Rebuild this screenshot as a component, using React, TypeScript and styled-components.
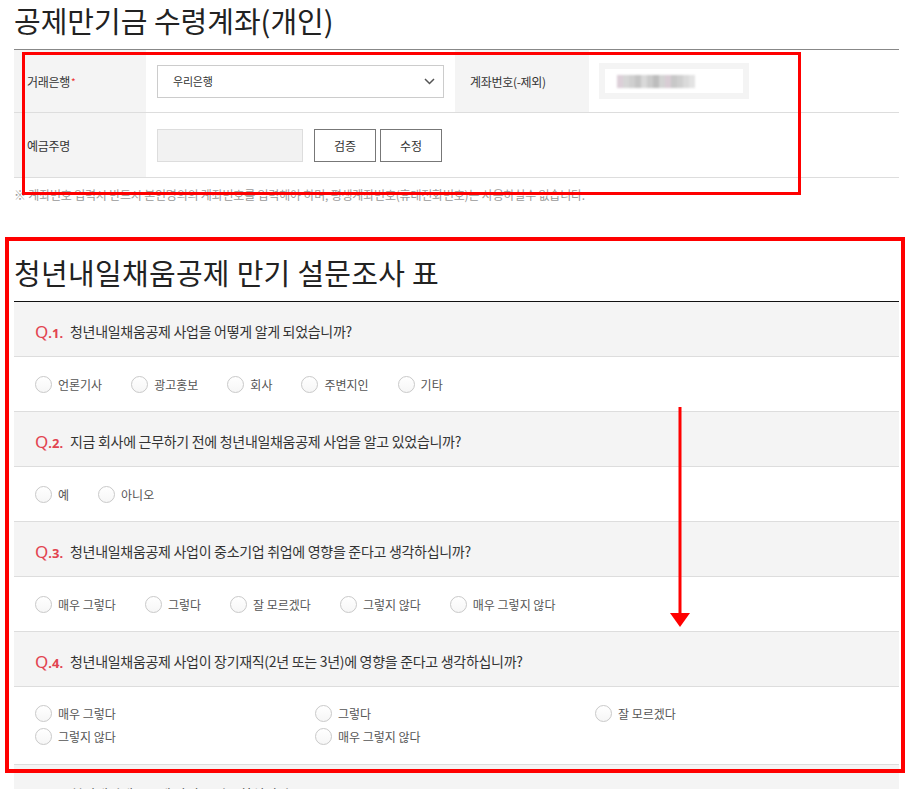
import React from 'react';
import styled, { createGlobalStyle } from 'styled-components';

const GlobalStyle = createGlobalStyle`
  html, body {
    margin: 0;
    padding: 0;
    background: #fff;
  }
  body {
    font-family: "Noto Sans CJK KR", "Noto Sans", sans-serif;
    color: #333;
  }
`;

const Page = styled.div`
  position: relative;
  width: 885px;
  padding: 0 16px 40px 14px;
`;

const PageTitle = styled.h2`
  margin: 0;
  padding-bottom: 9px;
  font-size: 29px;
  line-height: 40px;
  font-weight: 400;
  letter-spacing: 0;
  color: #222;
  border-bottom: 1px solid #888;
`;

// 계좌 입력 테이블
const AccountTable = styled.div`
  display: flex;
  flex-direction: column;
`;

const Row = styled.div<{ $h: number }>`
  display: flex;
  height: ${p => p.$h}px;
  border-bottom: 1px solid #ddd;
`;

const LabelCell = styled.div<{ $w: number }>`
  width: ${p => p.$w}px;
  flex-shrink: 0;
  display: flex;
  align-items: center;
  padding-left: 13px;
  box-sizing: border-box;
  background: #f4f4f4;
  font-size: 12px;
  letter-spacing: -0.3px;
  color: #333;
`;

const ValueCell = styled.div<{ $w?: number; $pl?: number }>`
  ${p => (p.$w ? `width: ${p.$w}px; flex-shrink: 0;` : 'flex: 1;')}
  display: flex;
  align-items: center;
  gap: 4px;
  padding-left: ${p => p.$pl ?? 11}px;
  box-sizing: border-box;
`;

const Req = styled.span`
  color: #e33;
  font-size: 10px;
  margin-left: 1px;
`;

const SelectBox = styled.div`
  width: 287px;
  height: 33px;
  box-sizing: border-box;
  border: 1px solid #ccc;
  display: flex;
  align-items: center;
  justify-content: space-between;
  padding: 0 8px 0 15px;
  font-size: 11px;
  letter-spacing: -0.2px;
  color: #333;
`;

const MaskedInput = styled.div`
  width: 150px;
  height: 36px;
  box-sizing: border-box;
  border: 6px solid #f4f4f4;
  background: #fff;
  display: flex;
  align-items: center;
  padding-left: 12px;
`;

const Blur = styled.div`
  display: flex;
  filter: blur(0.8px);
`;

const BlurCell = styled.span<{ $c: string }>`
  width: 6px;
  height: 13px;
  background: ${p => p.$c};
`;

const NameInput = styled.div`
  width: 146px;
  height: 33px;
  box-sizing: border-box;
  border: 1px solid #ddd;
  background: #f2f2f2;
  margin-right: 7px;
`;

const Btn = styled.button`
  width: 62px;
  height: 33px;
  border: 1px solid #777;
  background: #fff;
  font-family: inherit;
  font-size: 12px;
  color: #333;
  padding: 0;
`;

const Note = styled.p`
  margin: 8px 0 0;
  font-size: 12px;
  line-height: 18px;
  letter-spacing: -0.2px;
  color: #999;
`;

const SurveyTitle = styled.h2`
  margin: 48px 0 0;
  padding-bottom: 9px;
  font-size: 29px;
  line-height: 40px;
  font-weight: 400;
  letter-spacing: 0.3px;
  color: #222;
  border-bottom: 1px solid #111;
`;

const QuestionHead = styled.div`
  height: 55px;
  display: flex;
  align-items: center;
  padding: 4px 0 0 21px;
  box-sizing: border-box;
  background: #f4f4f4;
  border-bottom: 1px solid #ddd;
  font-size: 14px;
  letter-spacing: -0.3px;
  color: #333;
`;

const QNum = styled.span`
  width: 35px;
  flex-shrink: 0;
  font-family: "Noto Sans", "Liberation Sans", sans-serif;
  font-weight: 700;
  font-size: 13px;
  letter-spacing: 0;
  color: #e2434f;
`;

const QLetter = styled.span`
  font-size: 17px;
  font-weight: 400;
`;

const AnswerRow = styled.div<{ $grid?: boolean }>`
  min-height: 55px;
  box-sizing: border-box;
  border-bottom: 1px solid #ddd;
  padding: ${p => (p.$grid ? '15px 0 16px 21px' : '0 0 0 21px')};
  display: ${p => (p.$grid ? 'grid' : 'flex')};
  ${p => (p.$grid ? 'grid-template-columns: repeat(3, 280px);' : 'align-items: center; gap: 29px;')}
`;

const Option = styled.label`
  display: flex;
  align-items: center;
  gap: 6px;
  height: 23px;
  font-size: 12px;
  letter-spacing: 0;
  color: #555;
`;

const Radio = styled.span`
  width: 15px;
  height: 15px;
  border-radius: 50%;
  border: 1px solid #c9c9c9;
  background: linear-gradient(#fff, #f6f6f6);
`;

// 캡처 위에 덧그린 빨간 표시
const MarkBox = styled.div<{ $x: number; $y: number; $w: number; $h: number; $b: number }>`
  position: absolute;
  left: ${p => p.$x}px;
  top: ${p => p.$y}px;
  width: ${p => p.$w}px;
  height: ${p => p.$h}px;
  box-sizing: border-box;
  border: ${p => p.$b}px solid #ff0000;
  pointer-events: none;
`;

const ArrowMark = styled.svg`
  position: absolute;
  left: 668px;
  top: 407px;
  pointer-events: none;
`;

type Question = { no: number; text: string; options: string[]; grid?: boolean };

const agree = ['매우 그렇다', '그렇다', '잘 모르겠다', '그렇지 않다', '매우 그렇지 않다'];

const questions: Question[] = [
  { no: 1, text: '청년내일채움공제 사업을 어떻게 알게 되었습니까?', options: ['언론기사', '광고홍보', '회사', '주변지인', '기타'] },
  { no: 2, text: '지금 회사에 근무하기 전에 청년내일채움공제 사업을 알고 있었습니까?', options: ['예', '아니오'] },
  { no: 3, text: '청년내일채움공제 사업이 중소기업 취업에 영향을 준다고 생각하십니까?', options: agree },
  { no: 4, text: '청년내일채움공제 사업이 장기재직(2년 또는 3년)에 영향을 준다고 생각하십니까?', options: agree, grid: true },
  { no: 5, text: '청년내일채움공제 사업을 만족하십니까?', options: agree },
];

const blurColors = ['#dccfd8', '#d6d6d6', '#cfcfcf', '#c4c4c4', '#d9d9d9', '#cbcbcb', '#bdbdbd', '#d3d3d3', '#d8ccd4', '#c8c8c8', '#cfcfcf', '#dadada', '#e3e3e3'];

export default function App() {
  return (
    <>
      <GlobalStyle />
      <Page>
        <PageTitle>공제만기금 수령계좌(개인)</PageTitle>
        <AccountTable>
          <Row $h={62}>
            <LabelCell $w={132}>
              거래은행<Req>*</Req>
            </LabelCell>
            <ValueCell $w={309}>
              <SelectBox>
                우리은행
                <svg width="11" height="7" viewBox="0 0 11 7">
                  <polyline points="1,1 5.5,5.5 10,1" fill="none" stroke="#555" strokeWidth="1.5" />
                </svg>
              </SelectBox>
            </ValueCell>
            <LabelCell $w={134} style={{ paddingLeft: 15 }}>계좌번호(-제외)</LabelCell>
            <ValueCell $pl={10}>
              <MaskedInput>
                <Blur>
                  {blurColors.map((c, i) => (
                    <BlurCell key={i} $c={c} />
                  ))}
                </Blur>
              </MaskedInput>
            </ValueCell>
          </Row>
          <Row $h={64}>
            <LabelCell $w={132}>예금주명</LabelCell>
            <ValueCell>
              <NameInput />
              <Btn>검증</Btn>
              <Btn>수정</Btn>
            </ValueCell>
          </Row>
        </AccountTable>
        <Note>※ 계좌번호 입력시 반드시 본인명의의 계좌번호를 입력해야 하며, 평생계좌번호(휴대전화번호)는 사용하실수 없습니다.</Note>

        <SurveyTitle>청년내일채움공제 만기 설문조사 표</SurveyTitle>
        {questions.map(q => (
          <div key={q.no}>
            <QuestionHead>
              <QNum>
                <QLetter>Q</QLetter>.{q.no}.
              </QNum>
              {q.text}
            </QuestionHead>
            <AnswerRow $grid={q.grid}>
              {q.options.map(o => (
                <Option key={o}>
                  <Radio />
                  {o}
                </Option>
              ))}
            </AnswerRow>
          </div>
        ))}

        <MarkBox $x={22} $y={52} $w={779} $h={143} $b={3} />
        <MarkBox $x={5} $y={237} $w={900} $h={536} $b={4} />
        <ArrowMark width="24" height="222" viewBox="0 0 24 222">
          <line x1="12" y1="0" x2="12" y2="208" stroke="#ff0000" strokeWidth="3" />
          <polygon points="2,206 22,206 12,220" fill="#ff0000" />
        </ArrowMark>
      </Page>
    </>
  );
}
